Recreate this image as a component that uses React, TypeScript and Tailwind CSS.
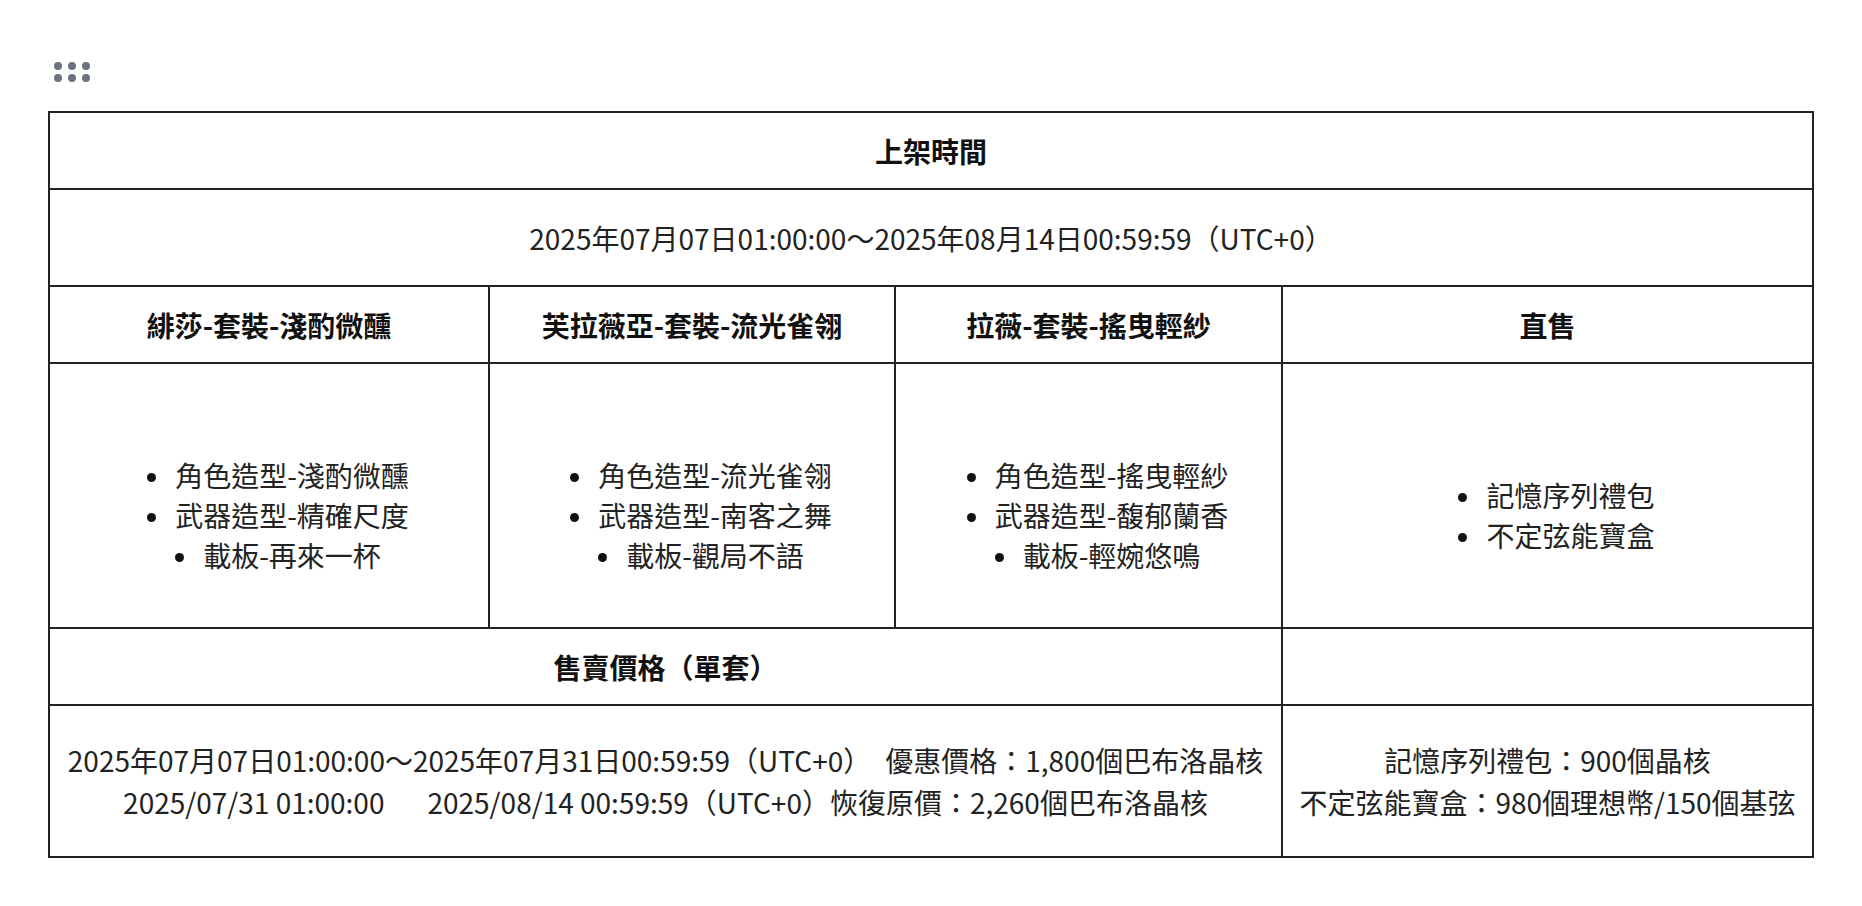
import React from "react";

const font = { fontFamily: '"Noto Sans CJK TC", "Noto Sans", sans-serif' };

function Grip() {
  return (
    <svg width="48" height="48" viewBox="0 0 24 24" fill="none" stroke="#6b7280" strokeWidth="2" strokeLinecap="round" strokeLinejoin="round">
      <circle cx="12" cy="9" r="1" />
      <circle cx="19" cy="9" r="1" />
      <circle cx="5" cy="9" r="1" />
      <circle cx="12" cy="15" r="1" />
      <circle cx="19" cy="15" r="1" />
      <circle cx="5" cy="15" r="1" />
    </svg>
  );
}

function List({ items }: { items: string[] }) {
  return (
    <ul className="pl-[18px] leading-[40px]">
      {items.map((t) => (
        <li key={t} className="flex items-center justify-center">
          <span className="mr-[19px] mt-[4px] inline-block h-[9px] w-[9px] shrink-0 rounded-full bg-[#111]" />
          <span>{t}</span>
        </li>
      ))}
    </ul>
  );
}

export default function App() {
  const th = "border-2 border-[#222] text-center align-middle font-bold text-[#111]";
  const td = "border-2 border-[#222] text-center align-middle";
  return (
    <div className="min-h-screen bg-white px-12 pt-12 text-[28px] text-[#222]" style={font}>
      <Grip />
      <table className="mt-[15px] w-full table-fixed border-collapse border-2 border-[#222]">
        <colgroup>
          <col className="w-[440px]" />
          <col className="w-[406px]" />
          <col className="w-[387px]" />
          <col />
        </colgroup>
        <tbody>
          <tr className="h-[77px]">
            <td colSpan={4} className={th}>上架時間</td>
          </tr>
          <tr className="h-[97px]">
            <td colSpan={4} className={td}>2025年07月07日01:00:00～2025年08月14日00:59:59（UTC+0）</td>
          </tr>
          <tr className="h-[77px]">
            <td className={th}>緋莎-套裝-淺酌微醺</td>
            <td className={th}>芙拉薇亞-套裝-流光雀翎</td>
            <td className={th}>拉薇-套裝-搖曳輕紗</td>
            <td className={th}>直售</td>
          </tr>
          <tr className="h-[265px]">
            <td className={td + " pt-[39px]"}>
              <List items={["角色造型-淺酌微醺", "武器造型-精確尺度", "載板-再來一杯"]} />
            </td>
            <td className={td + " pt-[39px]"}>
              <List items={["角色造型-流光雀翎", "武器造型-南客之舞", "載板-觀局不語"]} />
            </td>
            <td className={td + " pt-[39px]"}>
              <List items={["角色造型-搖曳輕紗", "武器造型-馥郁蘭香", "載板-輕婉悠鳴"]} />
            </td>
            <td className={td + " pt-[39px]"}>
              <List items={["記憶序列禮包", "不定弦能寶盒"]} />
            </td>
          </tr>
          <tr className="h-[77px]">
            <td colSpan={3} className={th}>售賣價格（單套）</td>
            <td className={td}></td>
          </tr>
          <tr className="h-[152px]">
            <td colSpan={3} className={td + " leading-[42px] whitespace-nowrap"}>
              <div>2025年07月07日01:00:00～2025年07月31日00:59:59（UTC+0）　優惠價格：1,800個巴布洛晶核</div>
              <div>
                2025/07/31 01:00:00<span className="inline-block w-[43px]" />2025/08/14 00:59:59（UTC+0）恢復原價：2,260個巴布洛晶核
              </div>
            </td>
            <td className={td + " leading-[42px] whitespace-nowrap"}>
              <div>記憶序列禮包：900個晶核</div>
              <div>不定弦能寶盒：980個理想幣/150個基弦</div>
            </td>
          </tr>
        </tbody>
      </table>
    </div>
  );
}
